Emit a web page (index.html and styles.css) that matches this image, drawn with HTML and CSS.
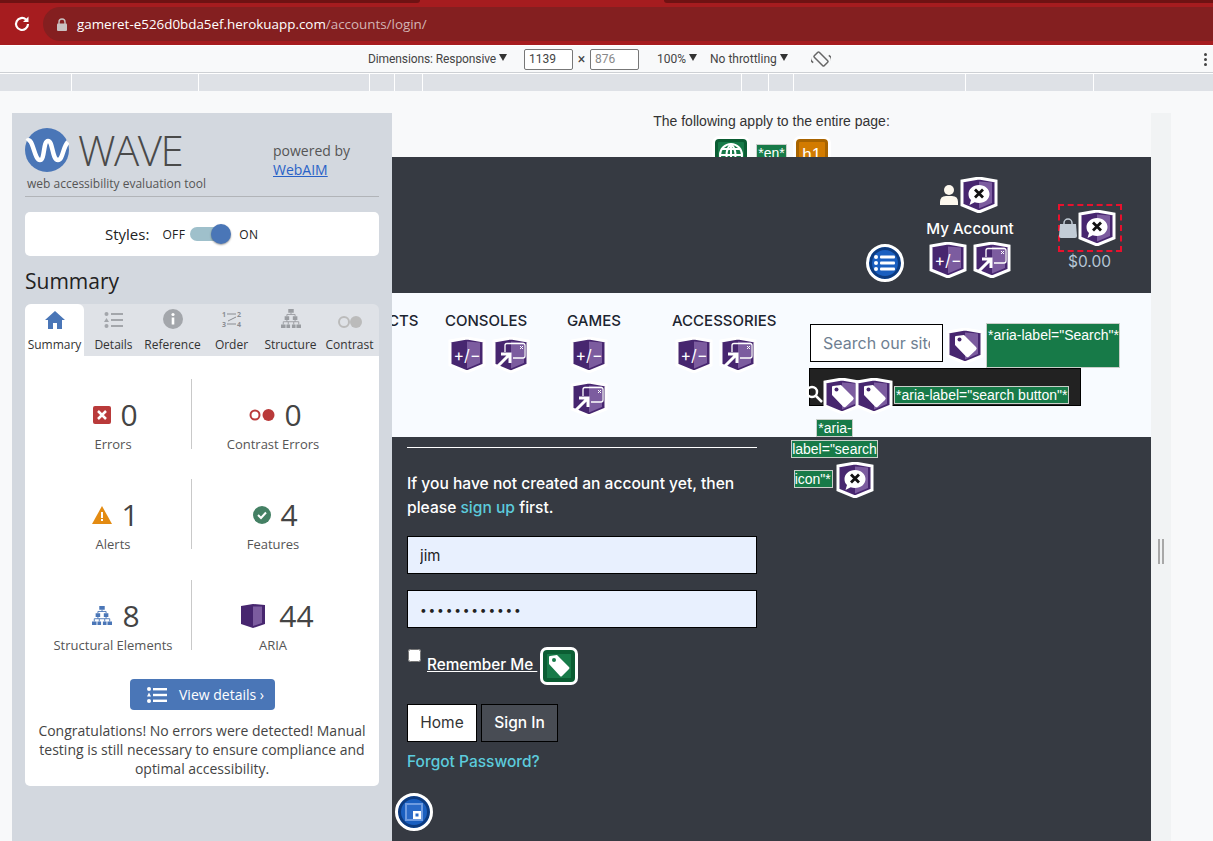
FILE: index.html
```html
<!DOCTYPE html>
<html>
<head>
    <title>Login - WAVE report</title>
    <link rel="stylesheet" href="styles.css">
</head>
<body>
    <svg class="defs" width="0" height="0">
        <symbol id="shield" viewBox="0 0 38 36">
            <path d="M2 4 19 1 36 4V28L19 35 2 28Z" fill="#47266f" stroke="#fff" stroke-width="3"/>
            <path d="M19 4.500 32 5.500V26L19 31.500Z" fill="#7c5c9f"/>
        </symbol>
        <symbol id="i-speech" viewBox="0 0 38 36">
            <use href="#shield"/>
            <path d="M19 8C25 8 29.500 12 29.500 17S25 26 19 26C17.500 26 16 25.700 14.700 25.200L9.500 28 11 23C9.300 21.500 8.500 19.500 8.500 17 8.500 12 13 8 19 8Z" fill="#fff"/>
            <path d="M15 12.500 23 20.500M23 12.500 15 20.500" stroke="#111" stroke-width="2.800" fill="none"/>
        </symbol>
        <symbol id="i-window" viewBox="0 0 38 36">
            <use href="#shield"/>
            <path d="M13 15V8.500Q13 6.500 15 6.500H31Q33 6.500 33 8.500V19Q33 21 31 21H21" stroke="#fff" stroke-width="1.300" fill="none"/>
            <path d="M28 9 31 12M31 9 28 12" stroke="#fff" stroke-width="1"/>
            <path d="M6 29 17 18M9 17H18V26" stroke="#fff" stroke-width="3" fill="none"/>
        </symbol>
        <symbol id="i-tag" viewBox="0 0 38 36">
            <use href="#shield"/>
            <path d="M9 9Q9 8 10 8L18 7 30 19Q31.500 20.500 30 22L23 28.500Q21.500 30 20 28.500L9 17Z" fill="#fff"/>
            <circle cx="13.500" cy="11.500" r="2" fill="#47266f"/>
        </symbol>
        <symbol id="i-aria" viewBox="0 0 26 26">
            <path d="M1 3 13 1 25 2V21L13 25 1 21Z" fill="#47266f"/>
            <path d="M13 3.500 22 3.500V20L13 23Z" fill="#7c5c9f"/>
        </symbol>
        <symbol id="i-tree" viewBox="0 0 22 22">
            <path d="M8 0h6v4H8zM4 8h5v4H4zM13 8h5v4h-5zM0 17h5v4H0zM6 17h4v4H6zM12 17h4v4h-4zM17 17h5v4h-5z" fill="currentColor"/>
            <path d="M11 4V6M6.500 6H15.500M6.500 6V8M15.500 6V8M6.500 12V14M15.500 12V14M2.500 14H19.500M2.500 14V17M8 14V17M14 14V17M19.500 14V17" stroke="currentColor" fill="none"/>
        </symbol>
    </svg>

    <div class="tabstrip"><span class="tab-left"></span><span class="tab-right"></span></div>
    <div class="toolbar">
        <svg class="reload" width="20" height="20" viewBox="0 0 20 20"><path d="M16 10a6 6 0 1 1-2-4.500" stroke="#fff" stroke-width="2.200" fill="none"/><path d="M16.500 2.500V8H11Z" fill="#fff"/></svg>
        <div class="omnibox">
            <svg width="10" height="13" viewBox="0 0 10 13"><path d="M2 6V4a3 3 0 0 1 6 0v2" stroke="#c9c0c0" stroke-width="1.400" fill="none"/><rect y="5.500" width="10" height="7.500" rx="1" fill="#c9c0c0"/></svg>
            <span class="url-host">gameret-e526d0bda5ef.herokuapp.com</span><span class="url-path">/accounts/login/</span>
        </div>
    </div>

    <div class="devbar">
        <span class="dev-dim">Dimensions: Responsive <i class="caret"></i></span>
        <span class="dev-input">1139</span>
        <span class="dev-times">×</span>
        <span class="dev-input dev-input-off">876</span>
        <span class="dev-zoom">100% <i class="caret"></i></span>
        <span class="dev-throttle">No throttling <i class="caret"></i></span>
        <svg class="dev-rotate" width="20" height="20" viewBox="0 0 20 20"><g transform="rotate(-45 10 10)" fill="none" stroke="#666" stroke-width="1.500"><rect x="6.500" y="3" width="7" height="14" rx="1"/><path d="M2 7Q1 3 4 1M18 13Q19 17 16 19"/></g></svg>
        <span class="dev-dots"><i></i><i></i><i></i></span>
    </div>
    <div class="ruler"><span></span><span></span><span></span><span></span><span></span><span></span><span></span><span></span><span></span><span></span><span></span></div>

    <div class="stage">
        <aside class="wave">
            <div class="wave-head">
                <div class="wave-brand">
                    <div class="wave-logo">
                        <svg width="44" height="44" viewBox="0 0 44 44"><circle cx="22" cy="22" r="22" fill="#4a76b7"/><path d="M2 13C8 8 9 32 15 32 20 32 18 13 23 13 28 13 27 32 33 32 38 32 38 18 43 14" stroke="#fff" stroke-width="4.500" fill="none"/></svg>
                        <span class="wave-name">WAVE</span>
                    </div>
                    <div class="wave-tagline">web accessibility evaluation tool</div>
                </div>
                <div class="wave-powered">powered by<br><a href="#">WebAIM</a></div>
            </div>

            <div class="styles-card">
                <span class="styles-label">Styles:</span>
                <span class="styles-state">OFF</span>
                <span class="switch"><i></i></span>
                <span class="styles-state">ON</span>
            </div>

            <h2 class="summary-title">Summary</h2>

            <div class="tabs">
                <div class="wave-tab active">
                    <svg width="20" height="18" viewBox="0 0 20 18"><path d="M10 0 20 9H17V18H12V12H8V18H3V9H0Z" fill="#4a76b7"/></svg>
                    Summary
                </div>
                <div class="wave-tab">
                    <svg width="20" height="18" viewBox="0 0 20 18" fill="#a3a6ab"><circle cx="2.500" cy="3" r="2"/><rect x="7" y="2" width="12" height="2"/><path d="M2.500 7 5 11H0Z"/><rect x="7" y="8" width="12" height="2"/><circle cx="2.500" cy="15" r="2"/><rect x="7" y="14" width="12" height="2"/></svg>
                    Details
                </div>
                <div class="wave-tab">
                    <svg width="20" height="20" viewBox="0 0 20 20"><circle cx="10" cy="10" r="10" fill="#a3a6ab"/><rect x="8.700" y="8.500" width="2.600" height="7" fill="#fff"/><circle cx="10" cy="5.500" r="1.600" fill="#fff"/></svg>
                    Reference
                </div>
                <div class="wave-tab">
                    <svg width="22" height="20" viewBox="0 0 22 20" fill="none" stroke="#8a8d92"><path d="M6 5H15M6 15H15M15 8 7 12"/><text x="1" y="8" class="order-num">1</text><text x="16" y="8" class="order-num">2</text><text x="1" y="18" class="order-num">3</text><text x="16" y="18" class="order-num">4</text></svg>
                    Order
                </div>
                <div class="wave-tab">
                    <svg class="tree-grey" width="22" height="20"><use href="#i-tree"/></svg>
                    Structure
                </div>
                <div class="wave-tab">
                    <svg width="26" height="14" viewBox="0 0 26 14"><circle cx="7" cy="7" r="5" fill="none" stroke="#bbb" stroke-width="2"/><circle cx="19" cy="7" r="6" fill="#bbb"/></svg>
                    Contrast
                </div>
            </div>

            <div class="panel">
                <div class="stats">
                    <div class="stat">
                        <div class="stat-row">
                            <svg width="18" height="18" viewBox="0 0 18 18"><rect width="18" height="18" rx="2" fill="#b93a3a"/><path d="M5 5 13 13M13 5 5 13" stroke="#fff" stroke-width="2.500"/></svg>
                            <span class="stat-num">0</span>
                        </div>
                        <div class="stat-label">Errors</div>
                    </div>
                    <div class="stat">
                        <div class="stat-row">
                            <svg width="26" height="14" viewBox="0 0 26 14"><circle cx="6" cy="7" r="4.500" fill="none" stroke="#b93a3a" stroke-width="2"/><circle cx="19.500" cy="7" r="6" fill="#b93a3a"/></svg>
                            <span class="stat-num">0</span>
                        </div>
                        <div class="stat-label">Contrast Errors</div>
                    </div>
                    <div class="stat">
                        <div class="stat-row">
                            <svg width="20" height="18" viewBox="0 0 20 18"><path d="M10 0 20 18H0Z" fill="#e38b12"/><rect x="9" y="6" width="2" height="6" fill="#fff"/><rect x="9" y="13" width="2" height="2" fill="#fff"/></svg>
                            <span class="stat-num">1</span>
                        </div>
                        <div class="stat-label">Alerts</div>
                    </div>
                    <div class="stat">
                        <div class="stat-row">
                            <svg width="18" height="18" viewBox="0 0 18 18"><circle cx="9" cy="9" r="9" fill="#448064"/><path d="M5 9 8 12 13 6.500" stroke="#fff" stroke-width="2" fill="none"/></svg>
                            <span class="stat-num">4</span>
                        </div>
                        <div class="stat-label">Features</div>
                    </div>
                    <div class="stat">
                        <div class="stat-row">
                            <svg class="tree-blue" width="22" height="20"><use href="#i-tree"/></svg>
                            <span class="stat-num">8</span>
                        </div>
                        <div class="stat-label">Structural Elements</div>
                    </div>
                    <div class="stat">
                        <div class="stat-row stat-row-wide">
                            <svg width="26" height="26"><use href="#i-aria"/></svg>
                            <span class="stat-num">44</span>
                        </div>
                        <div class="stat-label">ARIA</div>
                    </div>
                </div>
                <a class="view-details" href="#">
                    <svg width="20" height="16" viewBox="0 0 20 16" fill="#fff"><circle cx="2" cy="2" r="2"/><rect x="6" y="1" width="14" height="2.400"/><path d="M2 5.500 4 9.500H0Z"/><rect x="6" y="6.800" width="14" height="2.400"/><circle cx="2" cy="14" r="2"/><rect x="6" y="12.600" width="14" height="2.400"/></svg>
                    View details ›
                </a>
                <p class="congrats">Congratulations! No errors were detected! Manual testing is still necessary to ensure compliance and optimal accessibility.</p>
            </div>
        </aside>

        <main class="page">
            <div class="page-notes">
                <p>The following apply to the entire page:</p>
                <div class="page-badges">
                    <span class="badge badge-green">
                        <svg width="26" height="26" viewBox="0 0 26 26" fill="none" stroke="#fff" stroke-width="2"><circle cx="13" cy="13" r="11"/><path d="M2 13H24M13 2V24M4 7H22M4 19H22M13 2C7 8 7 18 13 24M13 2C19 8 19 18 13 24"/></svg>
                    </span>
                    <span class="aria-note">*en*</span>
                    <span class="badge badge-orange">h1</span>
                </div>
            </div>

            <header class="site-header">
                <div class="account">
                    <div class="account-top">
                        <svg width="18" height="20" viewBox="0 0 18 20" fill="#fdf8ee"><circle cx="9" cy="5" r="5"/><path d="M0 20V17Q0 11 6 11H12Q18 11 18 17V20Z"/></svg>
                        <svg class="wave-icon" width="38" height="36"><use href="#i-speech"/></svg>
                    </div>
                    <div class="account-label">My Account</div>
                    <div class="account-icons">
                        <svg class="wave-icon" width="38" height="36" viewBox="0 0 38 36"><use href="#shield"/><text x="19" y="24" text-anchor="middle" class="toggle-text">+/−</text></svg>
                        <svg class="wave-icon" width="38" height="36"><use href="#i-window"/></svg>
                    </div>
                </div>
                <div class="cart">
                    <div class="cart-box">
                        <svg class="bag" width="18" height="20" viewBox="0 0 18 20"><path d="M5 8V5a4 4 0 0 1 8 0v3" stroke="#c2ccd6" stroke-width="1.500" fill="none"/><path d="M1 6H17L18 18Q18 20 16 20H2Q0 20 0 18Z" fill="#c2ccd6"/></svg>
                        <svg class="wave-icon" width="38" height="36"><use href="#i-speech"/></svg>
                    </div>
                    <div class="cart-total">$0.00</div>
                </div>
                <span class="round-badge round-list">
                    <svg width="22" height="18" viewBox="0 0 22 18" fill="#fff"><circle cx="2" cy="3" r="2"/><rect x="6" y="1.500" width="15" height="3" rx="1"/><circle cx="2" cy="9" r="2"/><rect x="6" y="7.500" width="15" height="3" rx="1"/><circle cx="2" cy="15" r="2"/><rect x="6" y="13.500" width="15" height="3" rx="1"/></svg>
                </span>
            </header>

            <nav class="site-nav">
                <div class="nav-item nav-products"><a href="#">CTS</a></div>
                <div class="nav-item nav-consoles">
                    <a href="#">CONSOLES</a>
                    <svg width="38" height="36" viewBox="0 0 38 36"><use href="#shield"/><text x="19" y="24" text-anchor="middle" class="toggle-text">+/−</text></svg>
                    <svg width="38" height="36"><use href="#i-window"/></svg>
                </div>
                <div class="nav-item nav-games">
                    <a href="#">GAMES</a>
                    <svg width="38" height="36" viewBox="0 0 38 36"><use href="#shield"/><text x="19" y="24" text-anchor="middle" class="toggle-text">+/−</text></svg>
                    <svg width="38" height="36"><use href="#i-window"/></svg>
                </div>
                <div class="nav-item nav-accessories">
                    <a href="#">ACCESSORIES</a>
                    <svg width="38" height="36" viewBox="0 0 38 36"><use href="#shield"/><text x="19" y="24" text-anchor="middle" class="toggle-text">+/−</text></svg>
                    <svg width="38" height="36"><use href="#i-window"/></svg>
                </div>
                <form class="search">
                    <div class="search-top">
                        <input class="search-input" type="text" placeholder="Search our site">
                        <svg width="38" height="36"><use href="#i-tag"/></svg>
                        <span class="aria-box">*aria-label="Search"*</span>
                    </div>
                    <div class="search-button">
                        <svg class="magnifier" width="18" height="18" viewBox="0 0 18 18" fill="none" stroke="#fff" stroke-width="2.500"><circle cx="7" cy="7" r="5"/><path d="M11 11 17 17"/></svg>
                        <svg class="wave-icon tag-one" width="38" height="36"><use href="#i-tag"/></svg>
                        <svg class="wave-icon tag-two" width="38" height="36"><use href="#i-tag"/></svg>
                        <span class="aria-note">*aria-label="search button"*</span>
                    </div>
                    <div class="aria-stack">
                        <span class="aria-note">*aria-label="search icon"*</span>
                        <svg class="wave-icon" width="38" height="36"><use href="#i-speech"/></svg>
                    </div>
                </form>
            </nav>

            <section class="login">
                <hr class="login-rule">
                <p class="login-intro">If you have not created an account yet, then<br>please <a href="#">sign up</a> first.</p>
                <input class="field" type="text" value="jim">
                <input class="field field-secret" type="password" value="password1234">
                <div class="remember">
                    <input class="remember-box" type="checkbox">
                    <a class="remember-label" href="#">Remember Me&nbsp;</a>
                    <span class="badge badge-tag">
                        <svg width="26" height="26" viewBox="0 0 26 26"><path d="M3 4Q3 3 4 3L11 2 23 14Q24 15 23 16L16 23Q15 24 14 23L3 11Z" fill="#fff"/><circle cx="8" cy="7" r="2" fill="#177a48"/></svg>
                    </span>
                </div>
                <div class="login-actions">
                    <a class="btn btn-home" href="#">Home</a>
                    <a class="btn btn-signin" href="#">Sign In</a>
                </div>
                <a class="forgot" href="#">Forgot Password?</a>
                <span class="round-badge round-frame">
                    <svg width="18" height="18" viewBox="0 0 18 18"><rect width="18" height="18" fill="#6e9be0"/><rect x="2" y="2" width="14" height="14" fill="#2a6ac8"/><rect x="8" y="8" width="8" height="8" fill="#fff"/><rect x="10.500" y="10.500" width="3" height="3" fill="#2a6ac8"/></svg>
                </span>
            </section>
        </main>

        <div class="gutter"><span></span></div>
    </div>
</body>
</html>
```

FILE: styles.css
```css
* {
    box-sizing: border-box;
}

html,
body {
    height: 841px;
    overflow: hidden;
}

body {
    margin: 0;
    font-family: Roboto, Arial, sans-serif;
    background-color: #f8f9fa;
}

a {
    text-decoration: none;
}

.defs {
    position: absolute;
}

.toggle-text {
    font-family: Inter, Roboto, sans-serif;
    font-size: 16px;
    fill: #fff;
}

/* browser chrome */
.tabstrip {
    height: 7px;
    background-color: #a61c1f;
    display: flex;
    justify-content: space-between;
}

.tab-left,
.tab-right {
    height: 3px;
    background-color: #6f1213;
}

.tab-left {
    width: 420px;
    border-radius: 0 0 6px 0;
}

.tab-right {
    width: 549px;
    border-radius: 0 0 0 6px;
}

.toolbar {
    height: 39px;
    background-color: #a61c1f;
    display: flex;
    padding-bottom: 4px;
    border-bottom: 1px solid #fff;
}

.reload {
    margin: 7px 11px 0 12px;
}

.omnibox {
    flex: 1;
    display: flex;
    align-items: center;
    gap: 10px;
    padding-left: 14px;
    background-color: #841f20;
    border-radius: 17px 0 0 17px;
    font-size: 13.400px;
    font-family: "Open Sans", sans-serif;
}

.url-host {
    color: #fff;
    margin-right: -10px;
}

.url-path {
    color: #d3b5b5;
}

.devbar {
    height: 27px;
    background-color: #f8f9fa;
    border-bottom: 1px solid #cdd0d4;
    display: flex;
    align-items: center;
    padding-left: 368px;
    font-size: 12px;
    color: #444;
}

.caret {
    display: inline-block;
    width: 0;
    height: 0;
    margin-bottom: 2px;
    border-left: 4px solid transparent;
    border-right: 4px solid transparent;
    border-top: 7px solid #333;
}

.dev-dim {
    width: 156px;
    letter-spacing: -0.1px;
}

.dev-input {
    width: 49px;
    height: 21px;
    line-height: 19px;
    padding-left: 4px;
    border: 1px solid #777;
    border-radius: 2px;
    background-color: #fff;
}

.dev-input-off {
    color: #888;
}

.dev-times {
    width: 17px;
    text-align: center;
    font-size: 14px;
}

.dev-zoom {
    width: 53px;
    margin-left: 18px;
}

.dev-throttle {
    width: 101px;
}

.dev-rotate {
    margin-right: 373px;
}

.dev-dots {
    display: flex;
    flex-direction: column;
    gap: 2px;
}

.dev-dots i {
    width: 3px;
    height: 3px;
    border-radius: 50%;
    background-color: #444;
}

.ruler {
    height: 18px;
    display: flex;
    gap: 1px;
    padding-top: 1px;
    background-color: #fff;
}

.ruler span {
    background-color: #dee1e6;
}

.ruler span:nth-child(1) { width: 71px; }
.ruler span:nth-child(2) { width: 126px; }
.ruler span:nth-child(3) { width: 170px; }
.ruler span:nth-child(4) { width: 24px; }
.ruler span:nth-child(5) { width: 27px; }
.ruler span:nth-child(6) { width: 318px; }
.ruler span:nth-child(7) { width: 26px; }
.ruler span:nth-child(8) { width: 24px; }
.ruler span:nth-child(9) { width: 171px; }
.ruler span:nth-child(10) { width: 127px; }
.ruler span:nth-child(11) { flex: 1; }

.stage {
    display: flex;
    height: 750px;
    padding: 22px 0 0 12px;
    overflow: hidden;
}

/* WAVE sidebar */
.wave {
    position: relative;
    z-index: 1;
    width: 380px;
    flex-shrink: 0;
    padding: 15px 13px 0;
    background-color: #d3d8df;
    font-family: "Open Sans", sans-serif;
    color: #444;
}

.wave-head {
    display: flex;
    justify-content: space-between;
    height: 69px;
    border-bottom: 1px solid #b1b4b8;
}

.wave-logo {
    display: flex;
    align-items: center;
    gap: 9px;
    height: 44px;
}

.wave-name {
    font-size: 42px;
    font-weight: 300;
    line-height: 44px;
    color: #4a4a4a;
    letter-spacing: -1.500px;
}

.wave-tagline {
    margin: 5px 0 0 2px;
    font-size: 12px;
    line-height: 14px;
    color: #555;
}

.wave-powered {
    width: 106px;
    padding-top: 13px;
    font-size: 14px;
    line-height: 19px;
    color: #555;
}

.wave-powered a {
    color: #2962c7;
    text-decoration: underline;
}

.styles-card {
    height: 44px;
    margin-top: 15px;
    display: flex;
    align-items: center;
    padding-left: 80px;
    background-color: #fff;
    border-radius: 5px;
    color: #222;
}

.styles-label {
    font-size: 15px;
    margin-right: 13px;
}

.styles-state {
    font-size: 12px;
    letter-spacing: 0.4px;
}

.switch {
    position: relative;
    width: 34px;
    height: 14px;
    margin: 0 15px 0 5px;
    border-radius: 7px;
    background-color: #9fc0cb;
}

.switch i {
    position: absolute;
    top: -3px;
    right: -7px;
    width: 20px;
    height: 20px;
    border-radius: 50%;
    background-color: #4a76b7;
    box-shadow: 0 1px 2px rgba(0, 0, 0, 0.4);
}

.summary-title {
    margin: 11px 0 9px;
    font-size: 21px;
    font-weight: 400;
    line-height: 28px;
    color: #222;
}

.tabs {
    display: flex;
    height: 52px;
    background-color: #dfe2e7;
    border-radius: 6px 6px 0 0;
}

.wave-tab {
    flex: 1;
    display: flex;
    flex-direction: column;
    align-items: center;
    justify-content: flex-end;
    gap: 8px;
    padding-bottom: 3px;
    font-size: 12px;
    line-height: 16px;
    color: #333;
    white-space: nowrap;
}

.wave-tab.active {
    background-color: #fff;
    border-radius: 6px 6px 0 0;
}

.order-num {
    font-size: 7px;
    font-weight: 700;
    fill: #8a8d92;
    stroke: none;
}

.tree-grey {
    color: #9a9da2;
}

.tree-blue {
    color: #4a76b7;
}

.panel {
    height: 430px;
    padding: 23px 25px 0 10px;
    background-color: #fff;
    border-radius: 0 0 5px 5px;
}

.stats {
    display: grid;
    grid-template-columns: 157px 162px;
    row-gap: 30px;
}

.stat {
    height: 70px;
    display: flex;
    flex-direction: column;
    align-items: center;
}

.stat:nth-child(n+5) {
    margin-top: 1px;
}

.stat:nth-child(odd) {
    border-right: 1px solid #c9c9c9;
}

.stat-row {
    display: flex;
    align-items: center;
    gap: 9px;
    height: 40px;
    margin-top: 16px;
    padding-left: 5px;
}

.stat-row-wide {
    gap: 13px;
    padding-left: 8px;
}

.stat-num {
    font-size: 30px;
    line-height: 40px;
    color: #444;
}

.stat-label {
    margin-top: 0;
    font-size: 13px;
    line-height: 18px;
    color: #555;
}

.view-details {
    display: flex;
    align-items: center;
    gap: 12px;
    width: 145px;
    height: 31px;
    margin: 29px 0 0 95px;
    padding-left: 17px;
    background-color: #4a76b7;
    border-radius: 4px;
    color: #fff;
    font-size: 14px;
}

.congrats {
    width: 338px;
    margin: 11px 0 0 -2px;
    text-align: center;
    font-size: 14px;
    line-height: 19px;
    color: #444;
}

/* page under test */
.page {
    width: 759px;
    flex-shrink: 0;
    background-color: #363a42;
    font-family: Inter, Roboto, sans-serif;
}

.page-notes {
    height: 44px;
    overflow: hidden;
    background-color: #f8f9fa;
    text-align: center;
    font-family: "Liberation Sans", Arial, sans-serif;
    font-size: 14px;
    color: #333;
}

.page-notes p {
    margin: 0;
    line-height: 16px;
}

.page-badges {
    display: flex;
    justify-content: center;
    align-items: flex-start;
    gap: 7px;
    margin-top: 7px;
}

.badge {
    display: flex;
    align-items: center;
    justify-content: center;
    width: 38px;
    height: 38px;
    border: 3px solid #fff;
    border-radius: 7px;
    color: #fff;
    font-size: 17px;
}

.badge-green {
    background-color: #177a48;
    box-shadow: inset 0 0 0 3px #0b5d33;
}

.badge-orange {
    background-color: #d27b00;
    box-shadow: inset 0 0 0 3px #a86400;
}

.badge-tag {
    margin-left: 3px;
    margin-top: 3px;
    background-color: #177a48;
    box-shadow: inset 0 0 0 4px #0b5d33;
}

.aria-note {
    padding: 0 1px;
    background-color: #177a48;
    outline: 1px solid #c9cfc9;
    color: #fff;
    font-family: "Liberation Sans", Arial, sans-serif;
    font-size: 14px;
}

.page-badges .aria-note {
    margin-top: 9px;
}

.site-header {
    position: relative;
    height: 136px;
    display: flex;
    justify-content: flex-end;
    gap: 38px;
    padding: 19px 29px 0 0;
    color: #fff;
}

.account {
    width: 100px;
    display: flex;
    flex-direction: column;
    align-items: center;
}

.account-top {
    display: flex;
    align-items: center;
    gap: 2px;
    height: 38px;
    margin-left: -2px;
}

.account-label {
    margin-top: 5px;
    font-size: 15.200px;
    font-weight: 500;
    line-height: 20px;
    white-space: nowrap;
}

.account-icons {
    display: flex;
    gap: 6px;
    margin-top: 3px;
}

.cart {
    width: 64px;
    margin-top: 28px;
}

.cart-box {
    display: flex;
    align-items: center;
    gap: 1px;
    height: 48px;
    border: 2px dashed #e8112d;
}

.bag {
    margin-left: -1px;
}

.cart-total {
    margin: 1px 0 0 10px;
    color: #b5c6d6;
    font-size: 15.500px;
    line-height: 18px;
}

.round-badge {
    position: absolute;
    display: flex;
    align-items: center;
    justify-content: center;
    width: 38px;
    height: 38px;
    border: 3px solid #fff;
    border-radius: 50%;
    background-color: #1a5fc0;
    box-shadow: inset 0 0 0 3px #0c3b80;
}

.round-list {
    top: 87px;
    left: 474px;
}

.site-nav {
    height: 144px;
    display: flex;
    align-items: flex-start;
    padding-top: 18px;
    background-color: #f8fbff;
    position: relative;
}

.nav-item {
    display: flex;
    flex-wrap: wrap;
    gap: 8px 0;
    flex-shrink: 0;
}

.nav-item a {
    flex: 0 0 100%;
    margin-bottom: -1px;
    white-space: nowrap;
    font-size: 15px;
    font-weight: 500;
    line-height: 19px;
    color: #1c2430;
}

.nav-item svg {
    margin: 0 3px;
}

.nav-products {
    width: 31px;
    margin-left: -4px;
}

.nav-consoles {
    width: 90px;
    margin-left: 26px;
}

.nav-games {
    width: 54px;
    margin-left: 32px;
}

.nav-accessories {
    width: 106px;
    margin-left: 51px;
}

.search {
    position: relative;
    width: 311px;
    margin: 13px 0 0 32px;
    flex-shrink: 0;
}

.search-top {
    display: flex;
    align-items: flex-start;
    gap: 3px;
}

.search-top svg {
    flex-shrink: 0;
    margin-top: 4px;
}

.search-input {
    width: 133px;
    height: 38px;
    padding: 0 12px;
    border: 1px solid #000;
    background-color: #fff;
    font-family: Inter, Roboto, sans-serif;
    font-size: 16px;
    flex-shrink: 0;
}

.search-input::placeholder {
    color: #6f7f92;
}

.aria-box {
    width: 132px;
    height: 43px;
    padding-left: 1px;
    background-color: #177a48;
    outline: 1px solid #c9cfc9;
    color: #fff;
    font-family: "Liberation Sans", Arial, sans-serif;
    font-size: 14px;
    line-height: 22px;
    white-space: nowrap;
}

.search-button {
    position: absolute;
    top: 44px;
    left: -1px;
    width: 272px;
    height: 38px;
    background-color: #222;
    border: 1px solid #000;
    white-space: nowrap;
}

.magnifier {
    position: absolute;
    left: -5px;
    top: 16px;
}

.wave-icon {
    flex-shrink: 0;
}

.tag-one {
    position: absolute;
    left: 13px;
    top: 9px;
}

.tag-two {
    position: absolute;
    left: 45px;
    top: 9px;
}

.search-button .aria-note {
    position: absolute;
    left: 85px;
    top: 18px;
}

.aria-stack {
    position: absolute;
    top: 93px;
    left: -18px;
    width: 85px;
    text-align: center;
    line-height: 20px;
}

.aria-stack .wave-icon {
    vertical-align: middle;
    margin: 3px 0;
}

.login {
    position: relative;
    padding: 10px 0 0 15px;
    color: #fff;
}

.login-rule {
    width: 350px;
    margin: 0;
    border: none;
    border-top: 1px solid #fff;
}

.login-intro {
    width: 380px;
    margin: 24px 0 16px;
    font-size: 15.600px;
    font-weight: 500;
    line-height: 24px;
}

.login-intro a {
    color: #5ccbdc;
}

.field {
    display: block;
    width: 350px;
    height: 38px;
    margin-bottom: 16px;
    padding: 0 12px;
    border: 1px solid #000;
    background-color: #e8f0fe;
    font-family: Inter, Roboto, sans-serif;
    font-size: 15px;
    color: #222;
}

.field-secret {
    font-size: 12px;
    letter-spacing: 1.800px;
}

.remember {
    display: flex;
    align-items: flex-start;
    height: 38px;
}

.remember-box {
    width: 13px;
    height: 13px;
    margin: 5px 6px 0 1px;
}

.remember-label {
    margin-top: 11px;
    color: #fff;
    font-size: 15.300px;
    font-weight: 500;
    line-height: 20px;
    text-decoration: underline;
}

.login-actions {
    display: flex;
    gap: 4px;
    margin-top: 22px;
}

.btn {
    height: 38px;
    line-height: 36px;
    text-align: center;
    border: 1px solid #000;
    font-size: 15.500px;
}

.btn-home {
    width: 70px;
    background-color: #fff;
    color: #333;
}

.btn-signin {
    width: 77px;
    background-color: #484c54;
    color: #fff;
    font-weight: 500;
}

.forgot {
    display: block;
    margin-top: 8px;
    color: #5ccbdc;
    font-size: 15.500px;
    font-weight: 500;
    line-height: 24px;
}

.round-frame {
    left: 3px;
    top: 356px;
}

.gutter {
    width: 20px;
    flex-shrink: 0;
    display: flex;
    align-items: center;
    justify-content: center;
    background-color: #f1f3f4;
    height: 728px;
}

.gutter span {
    width: 6px;
    height: 25px;
    margin-top: 148px;
    border-left: 2px solid #a8a8a8;
    border-right: 2px solid #a8a8a8;
}
```
